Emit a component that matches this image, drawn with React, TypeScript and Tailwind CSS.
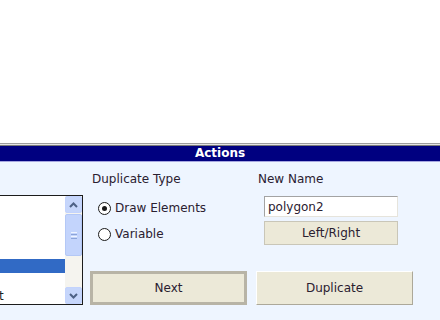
import React from "react";

const font = { fontFamily: '"DejaVu Sans", Verdana, sans-serif' };

function Radio({ checked, label }: { checked?: boolean; label: string }) {
  return (
    <div className="flex h-[26px] items-center pl-[8px]">
      <span className="flex h-[13px] w-[13px] items-center justify-center rounded-full border border-[#1a1a1a] bg-white">
        {checked && <span className="h-[5px] w-[5px] rounded-full bg-[#1a1a1a]" />}
      </span>
      <span className="ml-[4px] text-[12px] leading-[15px] text-[#2a2030]">{label}</span>
    </div>
  );
}

export default function App() {
  return (
    <div className="h-[320px] w-[440px] overflow-hidden bg-white" style={font}>
      <div className="h-[143px] bg-white" />
      <div className="h-[1px] bg-[#9c9c9c]" />
      <div className="h-[1px] bg-[#e4e4e4]" />
      <div className="h-[1px] bg-[#7a7a7a]" />
      <div className="flex h-[15px] items-center justify-center bg-[#000080] text-[12px] font-bold leading-[15px] text-white">
        Actions
      </div>
      <div className="h-[1px] bg-[#a6a6e0]" />
      <div className="flex h-[158px] bg-[#eef5ff]">
        {/* list box */}
        <div className="mt-[33px] flex h-[110px] w-[83px] border-y border-r border-[#1c1c1c]">
          <div className="flex flex-1 flex-col bg-white text-[12px] leading-[15px] text-[#222]">
            <div className="h-[68px]" />
            <div className="h-[15px] bg-[#316ac5]" />
            <div className="h-[17px]" />
            <div className="h-[15px] -ml-[1px]">t</div>
          </div>
          <div className="flex w-[17px] flex-col bg-[#f5f4ef]">
            <div className="flex h-[17px] items-center justify-center rounded-[2px] border border-[#c3d3fd] bg-[#c6d6fb]">
              <svg width="9" height="6" viewBox="0 0 9 6">
                <path d="M1 5 L4.5 1.5 L8 5" stroke="#4d6185" strokeWidth="2" fill="none" />
              </svg>
            </div>
            <div className="mt-[1px] flex h-[42px] items-center justify-center rounded-[2px] border border-[#b4c8f6] bg-[#c3d4fc]">
              <div className="flex flex-col gap-[1px]">
                <div className="h-[1px] w-[6px] bg-[#eef4fe]" />
                <div className="h-[1px] w-[6px] bg-[#8ca4d8]" />
                <div className="h-[1px] w-[6px] bg-[#eef4fe]" />
                <div className="h-[1px] w-[6px] bg-[#8ca4d8]" />
              </div>
            </div>
            <div className="flex-1" />
            <div className="flex h-[17px] items-center justify-center rounded-[2px] border border-[#c3d3fd] bg-[#c6d6fb]">
              <svg width="9" height="6" viewBox="0 0 9 6">
                <path d="M1 1 L4.5 4.5 L8 1" stroke="#4d6185" strokeWidth="2" fill="none" />
              </svg>
            </div>
          </div>
        </div>
        {/* right area */}
        <div className="ml-[7px] flex flex-col">
          <div className="flex">
            <div className="w-[166px] pt-[10px]">
              <div className="pl-[2px] text-[12px] leading-[15px] text-[#2a2030]">Duplicate Type</div>
              <div className="mt-[8px]">
                <Radio checked label="Draw Elements" />
                <Radio label="Variable" />
              </div>
            </div>
            <div className="pt-[10px]">
              <div className="pl-[2px] text-[12px] leading-[15px] text-[#2a2030]">New Name</div>
              <div className="ml-[8px] mt-[9px] flex h-[21px] w-[134px] items-center border border-t-[#a3a3a3] border-l-[#a3a3a3] border-b-[#e6e4dc] border-r-[#e6e4dc] bg-white pl-[3px] text-[12px] text-[#2a2030]">
                polygon2
              </div>
              <div className="ml-[8px] mt-[4px] flex h-[24px] w-[134px] items-center justify-center border border-[#c9c6b8] bg-[#ece9d8] text-[12px] text-[#2a2030]">
                Left/Right
              </div>
            </div>
          </div>
          <div className="mt-[24px] flex gap-[9px]">
            <div className="flex h-[34px] w-[157px] items-center justify-center border-[3px] border-[#b8b4a6] bg-[#ece9d8] text-[12px] text-[#2a2030]">
              Next
            </div>
            <div className="flex h-[34px] w-[157px] items-center justify-center border border-t-white border-l-white border-b-[#aca899] border-r-[#aca899] bg-[#ece9d8] text-[12px] text-[#2a2030]">
              Duplicate
            </div>
          </div>
        </div>
      </div>
    </div>
  );
}
